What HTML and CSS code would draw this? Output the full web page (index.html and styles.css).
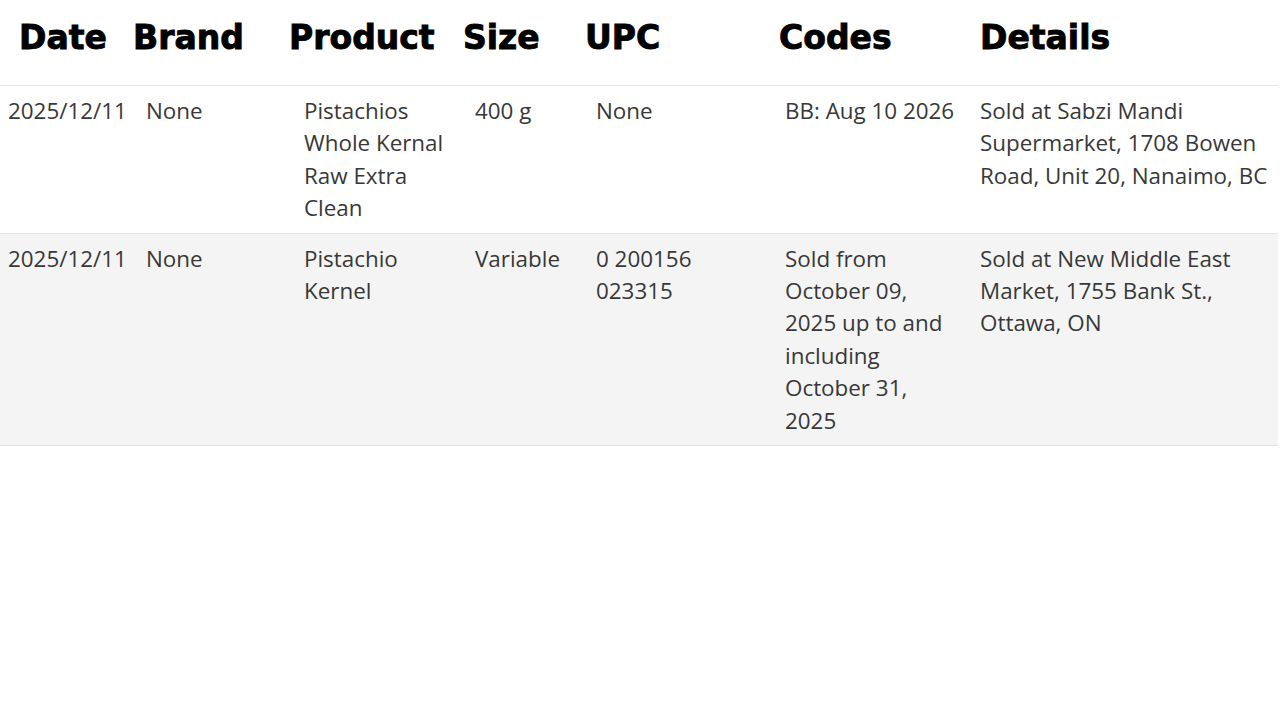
FILE: index.html
```html
<!DOCTYPE html>
<html lang="en">
<head>
<meta charset="utf-8">
<title>Recalls</title>
<link rel="stylesheet" href="styles.css">
</head>
<body>
<div class="table">
  <div class="head">
    <div class="th">Date</div>
    <div class="th">Brand</div>
    <div class="th">Product</div>
    <div class="th">Size</div>
    <div class="th">UPC</div>
    <div class="th">Codes</div>
    <div class="th">Details</div>
  </div>
  <div class="row">
    <div class="td">2025/12/11</div>
    <div class="td">None</div>
    <div class="td">Pistachios Whole Kernal Raw Extra Clean</div>
    <div class="td">400 g</div>
    <div class="td upc">None</div>
    <div class="td codes">BB: Aug 10 2026</div>
    <div class="td">Sold at Sabzi Mandi Supermarket, 1708 Bowen Road, Unit 20, Nanaimo, BC</div>
  </div>
  <div class="row alt">
    <div class="td">2025/12/11</div>
    <div class="td">None</div>
    <div class="td">Pistachio Kernel</div>
    <div class="td">Variable</div>
    <div class="td upc">0 200156 023315</div>
    <div class="td codes">Sold from October 09, 2025 up to and including October 31, 2025</div>
    <div class="td">Sold at New Middle East Market, 1755 Bank St., Ottawa, ON</div>
  </div>
</div>
</body>
</html>
```
FILE: styles.css
```css
html, body {
  margin: 0;
  padding: 0;
  background: #ffffff;
}

.table {
  width: 1278px;
}

.head {
  display: grid;
  grid-template-columns: 114px 156px 174px 122px 194px 201px 1fr;
  padding-left: 19px;
  height: 85px;
  border-bottom: 1px solid #e6e6e6;
}

.th {
  font-family: "DejaVu Sans", sans-serif;
  font-weight: bold;
  font-size: 33px;
  line-height: 38px;
  padding-top: 19px;
  color: #000;
  -webkit-text-stroke: 0.9px #000;
  white-space: nowrap;
}

.row {
  display: grid;
  grid-template-columns: 138px 158px 171px 121px 189px 195px 1fr;
  border-bottom: 1px solid #e3e3e3;
}

.row.alt {
  background: #f4f4f4;
}

.td {
  font-family: "Open Sans", "Noto Sans", sans-serif;
  font-size: 22.4px;
  line-height: 32.4px;
  color: #383838;
  padding: 9px 6px 8px 8px;
}

.td.upc {
  padding-right: 60px;
}

.td.codes {
  padding-right: 13px;
}
```
